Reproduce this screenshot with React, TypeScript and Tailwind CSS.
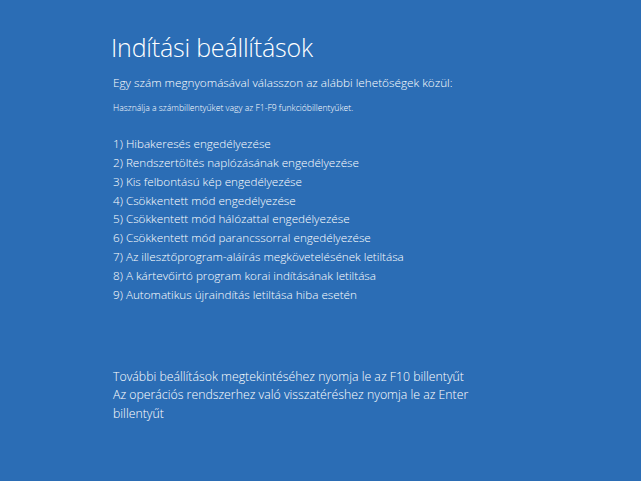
export default function App() {
  const options = [
    '1) Hibakeresés engedélyezése',
    '2) Rendszertöltés naplózásának engedélyezése',
    '3) Kis felbontású kép engedélyezése',
    '4) Csökkentett mód engedélyezése',
    '5) Csökkentett mód hálózattal engedélyezése',
    '6) Csökkentett mód parancssorral engedélyezése',
    '7) Az illesztőprogram-aláírás megkövetelésének letiltása',
    '8) A kártevőirtó program korai indításának letiltása',
    '9) Automatikus újraindítás letiltása hiba esetén',
  ];

  return (
    <div className="w-[641px] h-[481px] bg-[#2b6db5] text-white font-['Open_Sans',sans-serif] overflow-hidden">
      <div className="pl-[113px] pt-[29px]">
        <h1 className="-ml-[2px] text-[25px] font-light leading-[36px] tracking-[-0.2px]">Indítási beállítások</h1>
        <p className="mt-[7px] text-[11.75px] leading-[20px] font-light">
          Egy szám megnyomásával válasszon az alábbi lehetőségek közül:
        </p>
        <p className="mt-[10px] text-[8.6px] leading-[12px] font-light">
          Használja a számbillentyűket vagy az F1-F9 funkcióbillentyűket.
        </p>
        <ul className="mt-[20px] flex flex-col">
          {options.map((o) => (
            <li key={o} className="text-[11.7px] leading-[18.85px] font-light">
              {o}
            </li>
          ))}
        </ul>
        <div className="mt-[64px] text-[12.3px] leading-[18.5px] font-light">
          <p>További beállítások megtekintéséhez nyomja le az F10 billentyűt</p>
          <p>Az operációs rendszerhez való visszatéréshez nyomja le az Enter</p>
          <p>billentyűt</p>
        </div>
      </div>
    </div>
  );
}
